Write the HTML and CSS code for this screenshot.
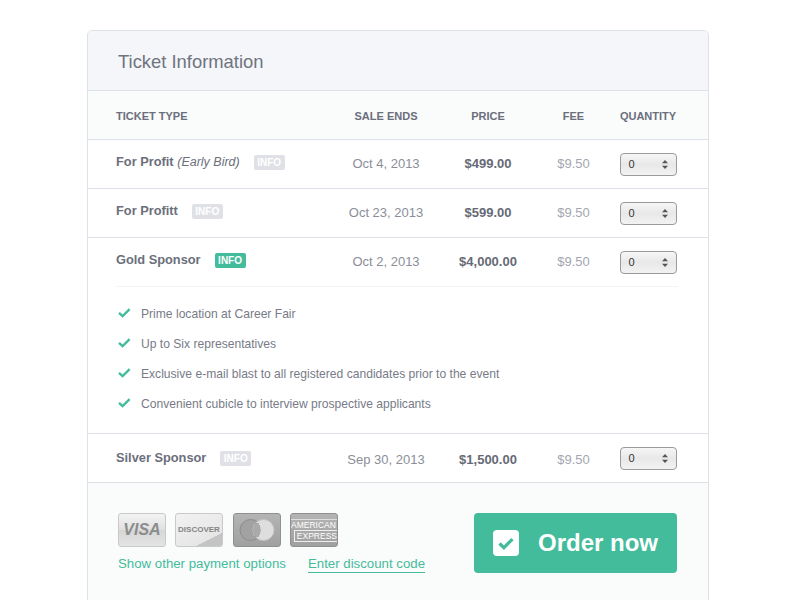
FILE: index.html
```html
<!DOCTYPE html>
<html>
<head>
<meta http-equiv="Content-Type" content="text/html; charset=utf-8" />
<title>Ticket Information</title>
<link rel="stylesheet" href="styles.css">
</head>
<body>
<div class="ticketBox">
	<h1 class="boxTitle">Ticket Information</h1>

	<div class="row headRow">
		<div class="typeCol">TICKET TYPE</div>
		<div>SALE ENDS</div>
		<div>PRICE</div>
		<div>FEE</div>
		<div>QUANTITY</div>
	</div>

	<div class="row">
		<div class="typeCol"><b>For Profit</b> <i>(Early Bird)</i><span class="info">INFO</span></div>
		<div class="date">Oct 4, 2013</div>
		<div class="price">$499.00</div>
		<div class="fee">$9.50</div>
		<div class="qtyCol"><span class="qty">0<svg class="arrows" width="6" height="9" viewBox="0 0 6 9"><path d="M3 0L6 3.2H0zM3 9L0 5.8H6z"/></svg></span></div>
	</div>

	<div class="row">
		<div class="typeCol"><b>For Profitt</b><span class="info">INFO</span></div>
		<div class="date">Oct 23, 2013</div>
		<div class="price">$599.00</div>
		<div class="fee">$9.50</div>
		<div class="qtyCol"><span class="qty">0<svg class="arrows" width="6" height="9" viewBox="0 0 6 9"><path d="M3 0L6 3.2H0zM3 9L0 5.8H6z"/></svg></span></div>
	</div>

	<div class="openRow">
		<div class="row innerRow">
			<div class="typeCol"><b>Gold Sponsor</b><span class="info active">INFO</span></div>
			<div class="date">Oct 2, 2013</div>
			<div class="price">$4,000.00</div>
			<div class="fee">$9.50</div>
			<div class="qtyCol"><span class="qty">0<svg class="arrows" width="6" height="9" viewBox="0 0 6 9"><path d="M3 0L6 3.2H0zM3 9L0 5.8H6z"/></svg></span></div>
		</div>
		<ul class="perks">
			<li><svg class="tick" width="13" height="10" viewBox="0 0 13 10"><path d="M1 4.8l3.6 3.4L11.6 1.2"/></svg>Prime location at Career Fair</li>
			<li><svg class="tick" width="13" height="10" viewBox="0 0 13 10"><path d="M1 4.8l3.6 3.4L11.6 1.2"/></svg>Up to Six representatives</li>
			<li><svg class="tick" width="13" height="10" viewBox="0 0 13 10"><path d="M1 4.8l3.6 3.4L11.6 1.2"/></svg>Exclusive e-mail blast to all registered candidates prior to the event</li>
			<li><svg class="tick" width="13" height="10" viewBox="0 0 13 10"><path d="M1 4.8l3.6 3.4L11.6 1.2"/></svg>Convenient cubicle to interview prospective applicants</li>
		</ul>
	</div>

	<div class="row lastRow">
		<div class="typeCol"><b>Silver Sponsor</b><span class="info">INFO</span></div>
		<div class="date">Sep 30, 2013</div>
		<div class="price">$1,500.00</div>
		<div class="fee">$9.50</div>
		<div class="qtyCol"><span class="qty">0<svg class="arrows" width="6" height="9" viewBox="0 0 6 9"><path d="M3 0L6 3.2H0zM3 9L0 5.8H6z"/></svg></span></div>
	</div>

	<div class="payBar">
		<div class="payLeft">
			<div class="cards">
				<span class="card light visa">VISA</span>
				<span class="card light discover">DISCOVER</span>
				<span class="card dark mc">
					<svg width="38" height="26" viewBox="0 0 38 26">
						<circle cx="12.5" cy="13" r="10.5" fill="#a2a2a2" stroke="#8c8c8c"/>
						<circle cx="25.5" cy="13" r="10.5" fill="#dedede" stroke="#c4c4c4"/>
						<path d="M17 7h4M16 9h6M15.5 11h7M15.2 13h7.6M15.5 15h7M16 17h6M17 19h4" stroke="#777" stroke-width="1"/>
					</svg>
				</span>
				<span class="card dark amex"><span class="amexTop">AMERICAN</span><span class="amexLow">EXPRESS</span></span>
			</div>
			<div class="payLinks">
				<a class="payLink">Show other payment options</a>
				<a class="payLink under">Enter discount code</a>
			</div>
		</div>
		<button class="orderBtn">
			<svg width="26" height="26" viewBox="0 0 26 26"><rect width="26" height="26" rx="4" fill="#fff"/><path d="M6.5 13.5l4.4 4.2 8.6-8.6" fill="none" stroke="#43bc9b" stroke-width="3.2"/></svg>
			Order now
		</button>
	</div>
</div>
</body>
</html>
```

FILE: styles.css
```css
body
{
	margin: 0;
	height: 600px;
	overflow: hidden;
	background: #fff;
	color: #6b6f7c;
	font-family: "Liberation Sans", Arial, Helvetica, sans-serif;
}
.ticketBox
{
	margin: 30px 0 0 87px;
	width: 620px;
	height: 580px;
	border: 1px solid #dfe1e8;
	border-radius: 5px 5px 0 0;
	overflow: hidden;
}
.boxTitle
{
	margin: 0;
	height: 58px;
	padding: 1px 0 0 30px;
	background: #f5f6f9;
	border-bottom: 1px solid #dfe1e8;
	font-size: 18.4px;
	font-weight: normal;
	line-height: 59px;
	color: #6f7480;
}
.row
{
	display: grid;
	grid-template-columns: 213px 114px 90px 81px 68px;
	align-items: center;
	box-sizing: border-box;
	height: 49px;
	padding: 0 26px 2px 28px;
	border-bottom: 1px solid #dfe1e8;
	text-align: center;
	font-size: 13px;
}
.headRow
{
	padding-top: 2px;
	padding-bottom: 0;
	background: #fafbfb;
	font-size: 11px;
	font-weight: bold;
	color: #6b6f7c;
}
.lastRow
{
	padding-top: 2px;
	padding-bottom: 0;
}
.typeCol
{
	margin-top: -2px;
	text-align: left;
	color: #6b6f7c;
	white-space: nowrap;
}
.headRow .typeCol { margin-top: 0; }
.typeCol b { font-size: 12.8px; }
.typeCol i { font-size: 12.5px; }
.date { color: #8b8e99; }
.price { font-weight: bold; color: #666a76; }
.fee { color: #a3a6af; }
.info
{
	display: inline-block;
	margin-left: 14px;
	padding: 0 3.5px;
	height: 15px;
	background: #e0e1e7;
	border-radius: 2px;
	color: #fff;
	font-size: 10px;
	font-weight: bold;
	line-height: 15px;
}
.active { background: #43bc9b; }
.qtyCol
{
	display: flex;
	justify-content: center;
	margin-top: 2px;
}
.lastRow .qtyCol
{
	margin-top: 0;
	margin-bottom: 2px;
}
.qty
{
	display: flex;
	align-items: center;
	justify-content: space-between;
	box-sizing: border-box;
	width: 57px;
	height: 23px;
	padding: 0 8px;
	border: 1px solid #9a9a9a;
	border-radius: 4px;
	background: linear-gradient(#f6f6f6, #e8e8e8 50%, #f2f2f2);
	color: #333;
	font-size: 11px;
}
.arrows { fill: #555; }
.openRow { border-bottom: 1px solid #dfe1e8; }
.innerRow
{
	margin: 0 30px 0 28px;
	padding-left: 0;
	padding-right: 0;
	border-bottom-color: #f3f4f6;
}
.perks
{
	margin: 0;
	padding: 12px 0 14px 30px;
	list-style: none;
	font-size: 12.1px;
	color: #777b87;
}
.perks li
{
	display: flex;
	align-items: center;
	height: 30px;
}
.tick
{
	margin: -2px 10px 0 0;
	fill: none;
	stroke: #43bc9b;
	stroke-width: 2.4;
}
.payBar
{
	display: flex;
	justify-content: space-between;
	height: 97px;
	padding: 30px 31px 0 30px;
	background: #fafbfb;
}
.cards { display: flex; }
.card
{
	display: flex;
	align-items: center;
	justify-content: center;
	box-sizing: border-box;
	width: 48px;
	height: 34px;
	margin-right: 9px;
	border-radius: 3px;
	border: 1px solid #c9c9c9;
	font-weight: bold;
}
.light { background: linear-gradient(#f3f3f3, #e0e0e0 50%, #d6d6d6 50%, #e4e4e4); }
.dark { background: linear-gradient(#b4b4b4, #a0a0a0); border-color: #8f8f8f; }
.visa
{
	font-size: 16px;
	font-style: italic;
	color: #8c8c8c;
}
.discover
{
	padding-bottom: 2px;
	font-size: 8px;
	color: #848484;
	background: linear-gradient(153deg, #f2f2f2, #e6e6e6 76%, #c4c4c4 76.5%);
}
.mc { margin-left: 1px; }
.amex
{
	flex-direction: column;
	align-items: flex-start;
	font-size: 8.5px;
	font-weight: normal;
	line-height: 10px;
	color: #fff;
	overflow: hidden;
	white-space: nowrap;
}
.amexTop
{
	padding-right: 1px;
	border: 1px solid #ddd;
	border-width: 1px 1px 0 0;
}
.amexLow
{
	align-self: flex-end;
	padding-left: 2px;
	border: 1px solid #eee;
	border-right: 0;
}
.payLinks
{
	display: flex;
	gap: 22px;
	margin-top: 8px;
}
.payLink
{
	color: #43bc9b;
	font-size: 13.25px;
	line-height: 17px;
}
.under { border-bottom: 1px solid #43bc9b; }
.orderBtn
{
	display: flex;
	align-items: center;
	gap: 19px;
	width: 203px;
	height: 60px;
	padding: 0 0 0 19px;
	background: #43bc9b;
	border: 0;
	border-radius: 4px;
	color: #fff;
	font-family: inherit;
	font-size: 24px;
	font-weight: bold;
}
```
